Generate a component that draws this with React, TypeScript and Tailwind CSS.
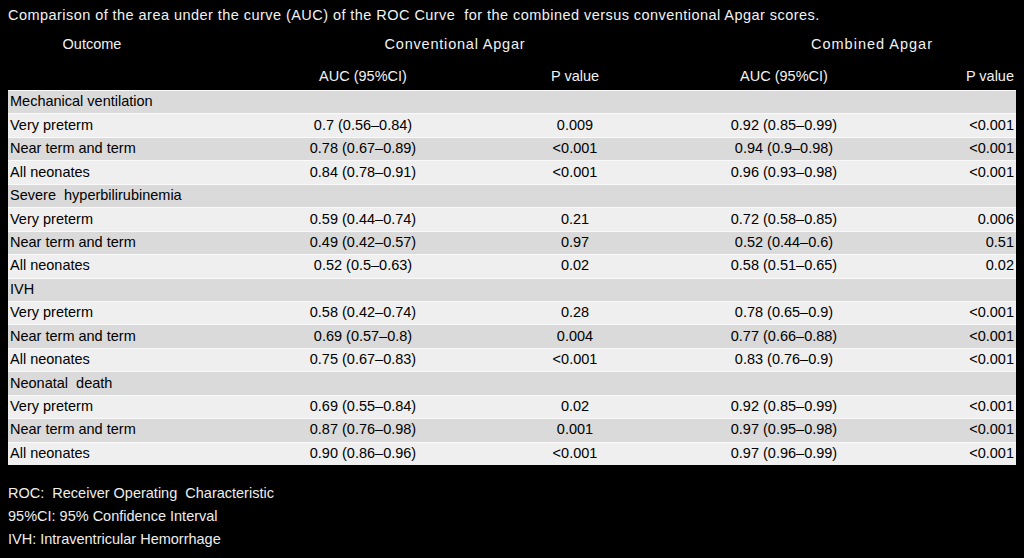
import React from "react"

type Row = { label: string; group?: boolean; auc1?: string; p1?: string; auc2?: string; p2?: string }

const rows: Row[] = [
  { label: "Mechanical ventilation", group: true },
  { label: "Very preterm", auc1: "0.7 (0.56–0.84)", p1: "0.009", auc2: "0.92 (0.85–0.99)", p2: "<0.001" },
  { label: "Near term and term", auc1: "0.78 (0.67–0.89)", p1: "<0.001", auc2: "0.94 (0.9–0.98)", p2: "<0.001" },
  { label: "All neonates", auc1: "0.84 (0.78–0.91)", p1: "<0.001", auc2: "0.96 (0.93–0.98)", p2: "<0.001" },
  { label: "Severe  hyperbilirubinemia", group: true },
  { label: "Very preterm", auc1: "0.59 (0.44–0.74)", p1: "0.21", auc2: "0.72 (0.58–0.85)", p2: "0.006" },
  { label: "Near term and term", auc1: "0.49 (0.42–0.57)", p1: "0.97", auc2: "0.52 (0.44–0.6)", p2: "0.51" },
  { label: "All neonates", auc1: "0.52 (0.5–0.63)", p1: "0.02", auc2: "0.58 (0.51–0.65)", p2: "0.02" },
  { label: "IVH", group: true },
  { label: "Very preterm", auc1: "0.58 (0.42–0.74)", p1: "0.28", auc2: "0.78 (0.65–0.9)", p2: "<0.001" },
  { label: "Near term and term", auc1: "0.69 (0.57–0.8)", p1: "0.004", auc2: "0.77 (0.66–0.88)", p2: "<0.001" },
  { label: "All neonates", auc1: "0.75 (0.67–0.83)", p1: "<0.001", auc2: "0.83 (0.76–0.9)", p2: "<0.001" },
  { label: "Neonatal  death", group: true },
  { label: "Very preterm", auc1: "0.69 (0.55–0.84)", p1: "0.02", auc2: "0.92 (0.85–0.99)", p2: "<0.001" },
  { label: "Near term and term", auc1: "0.87 (0.76–0.98)", p1: "0.001", auc2: "0.97 (0.95–0.98)", p2: "<0.001" },
  { label: "All neonates", auc1: "0.90 (0.86–0.96)", p1: "<0.001", auc2: "0.97 (0.96–0.99)", p2: "<0.001" },
]

export default function App() {
  return (
    <div
      className="w-[1024px] h-[558px] bg-black text-[14.5px] overflow-hidden"
      style={{ fontFamily: '"Liberation Sans", Arial, sans-serif' }}
    >
      <div className="pt-[5px] pl-[8px] leading-[20px] tracking-[0.45px] text-[#f2f2f2] whitespace-pre">
        Comparison of the area under the curve (AUC) of the ROC Curve  for the combined versus conventional Apgar scores.
      </div>

      {/* header rows */}
      <div className="mt-[9px] flex leading-[20px] text-[#f2f2f2]">
        <div className="w-[184px] text-center">Outcome</div>
        <div className="w-[542px] text-center tracking-[0.8px]">Conventional Apgar</div>
        <div className="w-[292px] text-center tracking-[1px]">Combined Apgar</div>
      </div>
      <div className="mt-[12px] ml-[8px] w-[1008px] grid grid-cols-[252px_206px_218px_200px_132px] leading-[20px] text-[#f2f2f2]">
        <div />
        <div className="text-center">AUC (95%CI)</div>
        <div className="text-center">P value</div>
        <div className="text-center">AUC (95%CI)</div>
        <div className="text-right pr-[2px]">P value</div>
      </div>

      {/* table */}
      <div className="mt-[4px] ml-[8px] w-[1008px] text-black">
        {rows.map((r, i) => (
          <div
            key={i}
            className={`grid grid-cols-[252px_206px_218px_200px_132px] h-[23.44px] items-center whitespace-pre border-t border-[#fafafa] ${
              i % 2 === 0 ? "bg-[#dadada]" : "bg-[#efefef]"
            }`}
          >
            <div className="pl-[2px]">{r.label}</div>
            <div className="text-center">{r.auc1}</div>
            <div className="text-center">{r.p1}</div>
            <div className="text-center">{r.auc2}</div>
            <div className="text-right pr-[2px]">{r.p2}</div>
          </div>
        ))}
      </div>

      <div className="mt-[17px] pl-[8px] leading-[23px] text-[#eeeeee] whitespace-pre">
        <div>ROC:  Receiver Operating  Characteristic</div>
        <div>95%CI: 95% Confidence Interval</div>
        <div>IVH: Intraventricular Hemorrhage</div>
      </div>
    </div>
  )
}
